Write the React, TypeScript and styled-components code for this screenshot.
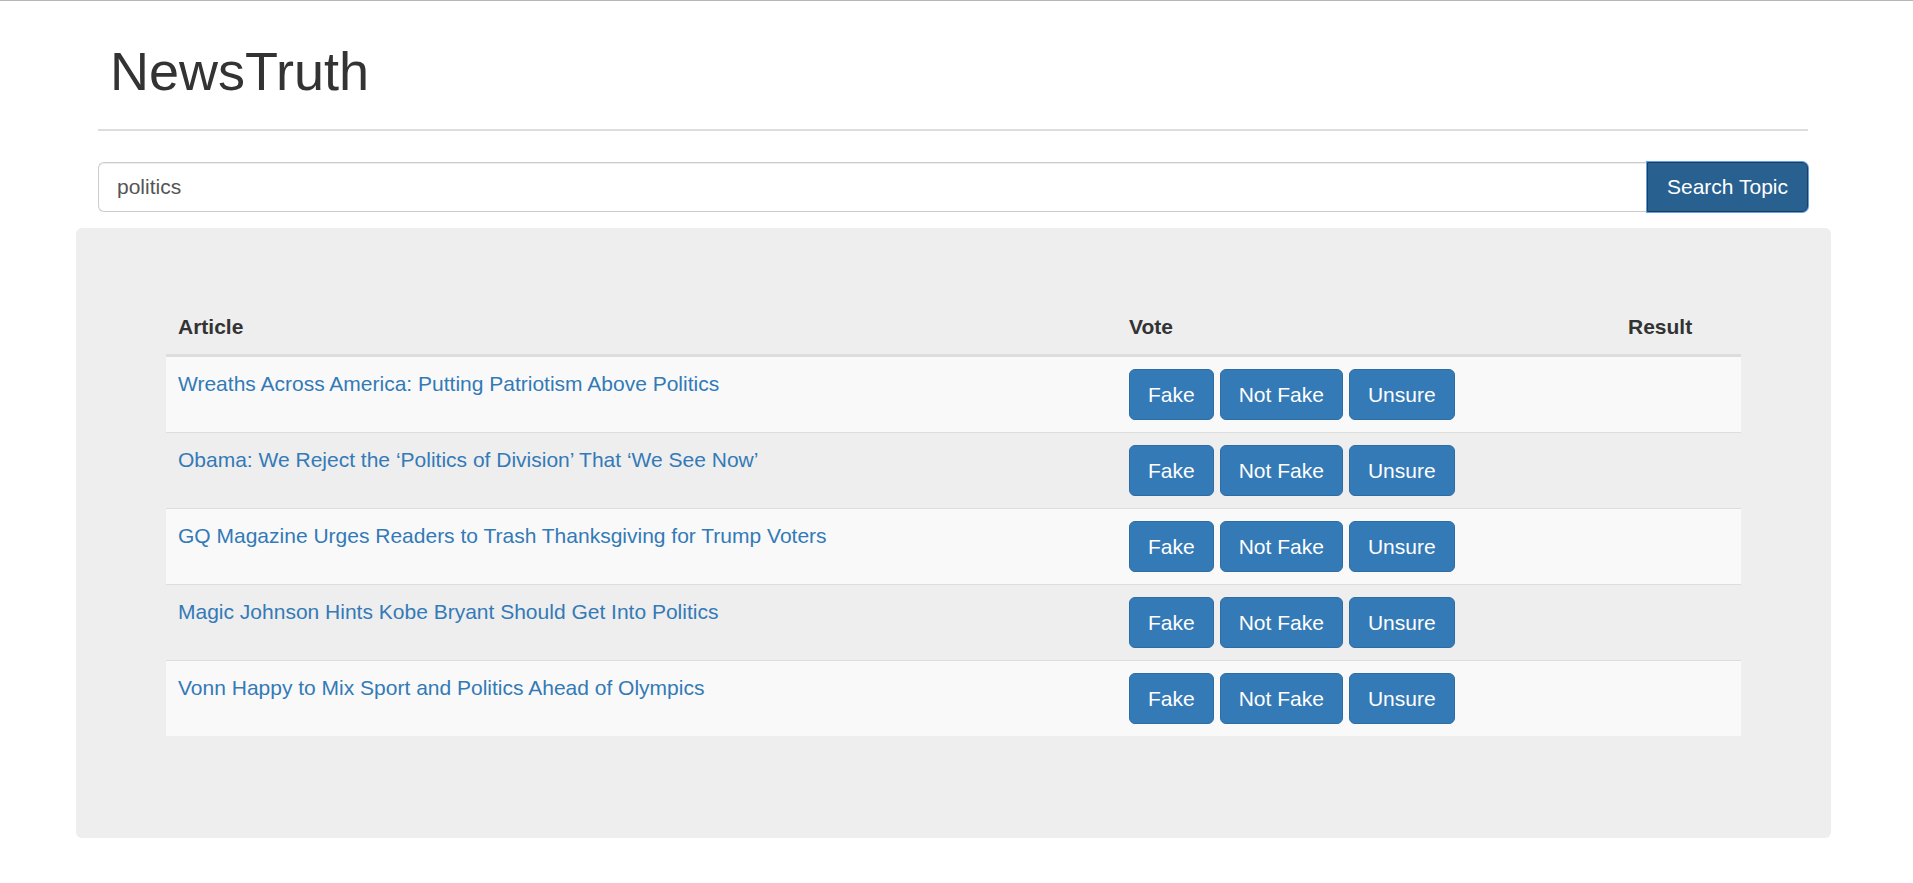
import React from "react";
import styled, { createGlobalStyle } from "styled-components";

const GlobalStyle = createGlobalStyle`
  html, body { margin: 0; padding: 0; background: #fff; }
  body {
    font-family: "Liberation Sans", Arial, Helvetica, sans-serif;
    font-size: 21px;
    line-height: 30px;
    color: #333;
  }
  * { box-sizing: border-box; }
`;

const Page = styled.div`
  border-top: 1px solid #b6b6b6;
  min-height: 882px;
  padding-bottom: 40px;
`;

const Header = styled.header`
  margin: 0 105px 0 98px;
  padding-top: 41px;
`;

const Title = styled.h1`
  margin: 0;
  padding-left: 12px;
  font-size: 54px;
  line-height: 59px;
  font-weight: 400;
  color: #333;
`;

const Rule = styled.hr`
  margin: 28px 0 0;
  border: 0;
  border-top: 2px solid #ddd;
  height: 0;
`;

const SearchRow = styled.form`
  display: flex;
  margin-top: 31px;
  height: 50px;
`;

const SearchInput = styled.input`
  flex: 1;
  min-width: 0;
  height: 50px;
  padding: 0 18px;
  font-family: inherit;
  font-size: 21px;
  color: #555;
  background: #fff;
  border: 1px solid #ccc;
  border-right: 0;
  border-radius: 6px 0 0 6px;
  box-shadow: inset 0 1px 1px rgba(0, 0, 0, 0.075);
  outline: none;
`;

const SearchButton = styled.button`
  width: 161px;
  height: 50px;
  font-family: inherit;
  font-size: 21px;
  color: #fff;
  background: #286090;
  border: 1px solid #1c3f5e;
  border-radius: 0 6px 6px 0;
  box-shadow: 0 0 0 1px #5f9fe6;
  cursor: pointer;
  padding: 0;
`;

const Panel = styled.section`
  margin: 16px 82px 0 76px;
  padding: 72px 90px 72px;
  background: #eee;
  border-radius: 6px;
`;

const Table = styled.table`
  width: 100%;
  border-collapse: separate;
  border-spacing: 0;
  margin-bottom: 30px;
  table-layout: fixed;
`;

const HeadCell = styled.th`
  text-align: left;
  font-weight: 700;
  padding: 12px 12px;
  line-height: 30px;
  border-bottom: 3px solid #ddd;
  color: #333;
`;

const Row = styled.tr<{ $striped: boolean }>`
  background: ${(p) => (p.$striped ? "#f9f9f9" : "transparent")};
  &:not(:first-child) > td { border-top: 1px solid #ddd; }
`;

const Cell = styled.td`
  padding: 12px 12px;
  vertical-align: top;
  line-height: 30px;
  height: 75px;
`;

const ArticleLink = styled.a`
  color: #337ab7;
  text-decoration: none;
`;

const VoteGroup = styled.div`
  display: flex;
  gap: 6px;
`;

const VoteButton = styled.button`
  height: 51px;
  padding: 0 18px;
  font-family: inherit;
  font-size: 21px;
  color: #fff;
  background: #337ab7;
  border: 1px solid #2e6da4;
  border-radius: 6px;
  cursor: pointer;
`;

const articles = [
  "Wreaths Across America: Putting Patriotism Above Politics",
  "Obama: We Reject the \u2018Politics of Division\u2019 That \u2018We See Now\u2019",
  "GQ Magazine Urges Readers to Trash Thanksgiving for Trump Voters",
  "Magic Johnson Hints Kobe Bryant Should Get Into Politics",
  "Vonn Happy to Mix Sport and Politics Ahead of Olympics",
];

export default function App() {
  return (
    <>
      <GlobalStyle />
      <Page>
        <Header>
          <Title>NewsTruth</Title>
          <Rule />
          <SearchRow onSubmit={(e) => e.preventDefault()}>
            <SearchInput defaultValue="politics" />
            <SearchButton type="submit">Search Topic</SearchButton>
          </SearchRow>
        </Header>
        <Panel>
          <Table>
            <colgroup>
              <col style={{ width: 951 }} />
              <col style={{ width: 499 }} />
              <col style={{ width: 125 }} />
            </colgroup>
            <thead>
              <tr>
                <HeadCell>Article</HeadCell>
                <HeadCell>Vote</HeadCell>
                <HeadCell>Result</HeadCell>
              </tr>
            </thead>
            <tbody>
              {articles.map((a, i) => (
                <Row key={a} $striped={i % 2 === 0}>
                  <Cell>
                    <ArticleLink href="#">{a}</ArticleLink>
                  </Cell>
                  <Cell>
                    <VoteGroup>
                      <VoteButton>Fake</VoteButton>
                      <VoteButton>Not Fake</VoteButton>
                      <VoteButton>Unsure</VoteButton>
                    </VoteGroup>
                  </Cell>
                  <Cell />
                </Row>
              ))}
            </tbody>
          </Table>
        </Panel>
      </Page>
    </>
  );
}
